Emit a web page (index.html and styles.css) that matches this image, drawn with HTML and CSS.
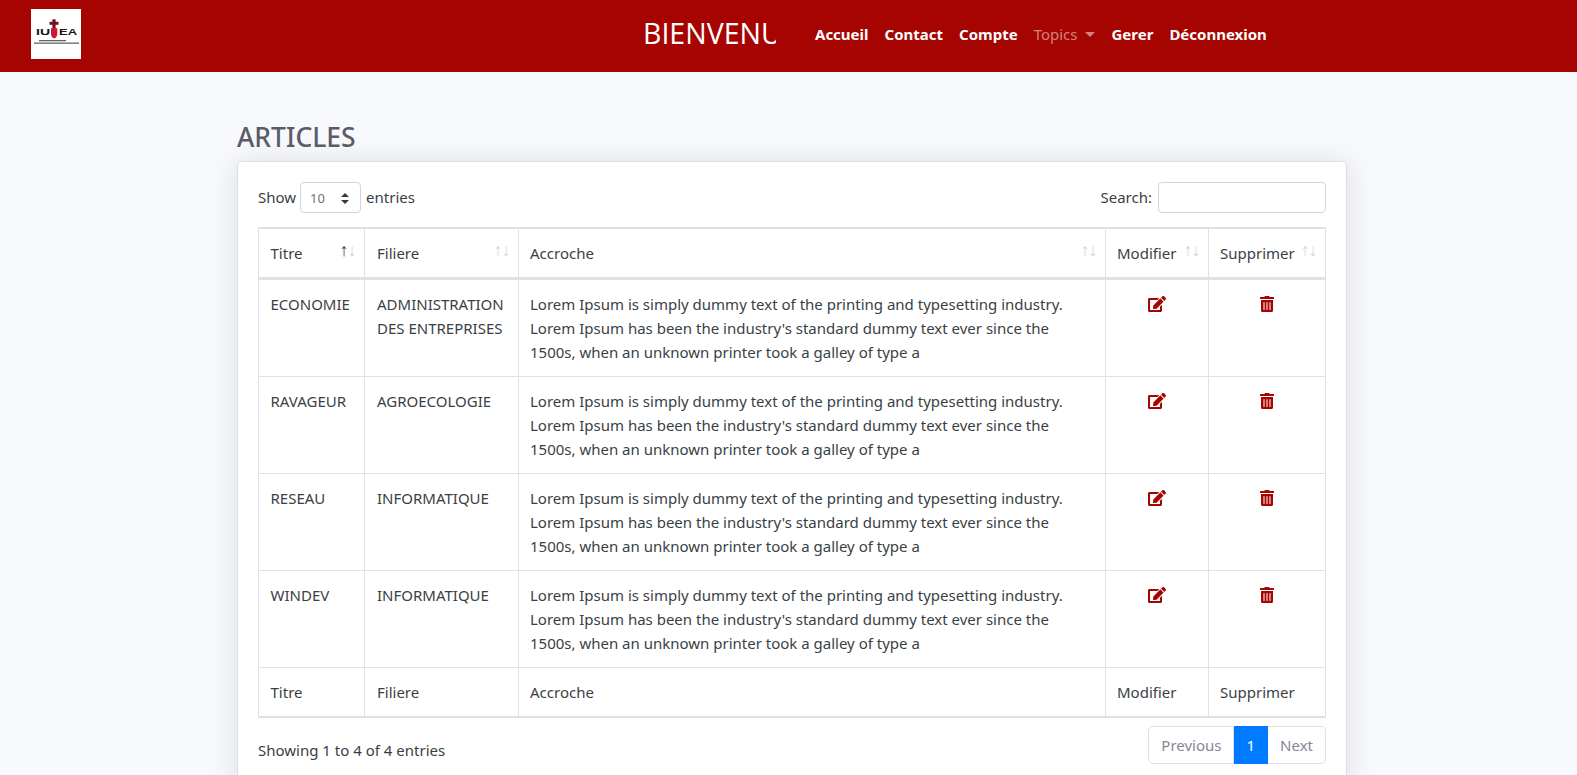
FILE: index.html
```html
<!DOCTYPE html>
<html lang="fr">
<head>
<meta charset="utf-8">
<title>Articles</title>
<link rel="stylesheet" href="styles.css">
</head>
<body>
<svg class="sprite" width="0" height="0" aria-hidden="true">
  <symbol id="i-edit" viewBox="0 0 576 512"><path d="M402.6 83.2l90.2 90.2c3.8 3.8 3.8 10 0 13.8L274.4 405.6l-92.8 10.3c-12.4 1.4-22.9-9.1-21.5-21.5l10.3-92.8L388.8 83.2c3.8-3.8 10-3.8 13.8 0zm162-22.9l-48.8-48.8c-15.2-15.2-39.9-15.2-55.2 0l-35.4 35.4c-3.8 3.8-3.8 10 0 13.8l90.2 90.2c3.8 3.8 10 3.8 13.8 0l35.4-35.4c15.2-15.3 15.2-40 0-55.2zM384 346.2V448H64V128h229.8c3.2 0 6.2-1.3 8.5-3.5l40-40c7.6-7.6 2.2-20.5-8.5-20.5H48C21.5 64 0 85.5 0 112v352c0 26.5 21.5 48 48 48h352c26.5 0 48-21.5 48-48V306.2c0-10.7-12.9-16-20.5-8.5l-40 40c-2.2 2.3-3.5 5.3-3.5 8.5z"/></symbol>
  <symbol id="i-trash" viewBox="0 0 448 512"><path d="M32 464a48 48 0 0 0 48 48h288a48 48 0 0 0 48-48V128H32zm272-256a16 16 0 0 1 32 0v224a16 16 0 0 1-32 0zm-96 0a16 16 0 0 1 32 0v224a16 16 0 0 1-32 0zm-96 0a16 16 0 0 1 32 0v224a16 16 0 0 1-32 0zM432 32H312l-9.4-18.7A24 24 0 0 0 281.1 0H166.8a23.72 23.72 0 0 0-21.4 13.3L136 32H16A16 16 0 0 0 0 48v32a16 16 0 0 0 16 16h416a16 16 0 0 0 16-16V48a16 16 0 0 0-16-16z"/></symbol>
</svg>

<header class="navbar">
  <a class="logo" href="#" aria-label="IUEA">
    <svg viewBox="0 0 50 50" width="50" height="50">
      <rect width="50" height="50" fill="#fff"/>
      <rect x="18.500" y="12.800" width="9" height="3" fill="#6d1420"/>
      <rect x="21.400" y="10.300" width="3.200" height="10" fill="#6d1420"/>
      <path d="M20 19.300h6.300v5.500c0 2.500-1.600 4.500-3.150 4.500S20 27.300 20 24.800z" fill="#d0172b"/>
      <text x="5" y="26" class="logo-l" textLength="14" lengthAdjust="spacingAndGlyphs">IU</text>
      <text x="28" y="26" class="logo-l" textLength="18" lengthAdjust="spacingAndGlyphs">EA</text>
      <rect x="8" y="31" width="27" height="1.300" fill="#666"/>
      <rect x="3" y="33.500" width="45" height="1.300" fill="#666"/>
    </svg>
  </a>
  <div class="marquee"><span>BIENVENU</span></div>
  <nav class="menu">
    <a href="#">Accueil</a>
    <a href="#">Contact</a>
    <a href="#">Compte</a>
    <a href="#" class="muted">Topics<i class="caret"></i></a>
    <a href="#">Gerer</a>
    <a href="#">Déconnexion</a>
  </nav>
</header>

<main class="content">
  <h1 class="title">ARTICLES</h1>
  <section class="card">
    <div class="controls">
      <label class="show">Show <span class="select">10<i class="updown"></i></span> entries</label>
      <label class="search">Search: <input type="search" class="search-input"></label>
    </div>
    <table class="table">
      <colgroup>
        <col class="c-titre"><col class="c-filiere"><col class="c-accroche"><col class="c-mod"><col class="c-sup">
      </colgroup>
      <thead>
        <tr>
          <th><span class="th-in">Titre<span class="sort"><b class="on">↑</b><b>↓</b></span></span></th>
          <th><span class="th-in">Filiere<span class="sort"><b>↑</b><b>↓</b></span></span></th>
          <th><span class="th-in">Accroche<span class="sort"><b>↑</b><b>↓</b></span></span></th>
          <th><span class="th-in">Modifier<span class="sort"><b>↑</b><b>↓</b></span></span></th>
          <th><span class="th-in">Supprimer<span class="sort"><b>↑</b><b>↓</b></span></span></th>
        </tr>
      </thead>
      <tbody>
        <tr>
          <td>ECONOMIE</td>
          <td>ADMINISTRATION DES ENTREPRISES</td>
          <td>Lorem Ipsum is simply dummy text of the printing and typesetting industry. Lorem Ipsum has been the industry's standard dummy text ever since the 1500s, when an unknown printer took a galley of type a</td>
          <td class="act"><svg class="ic-edit"><use href="#i-edit"/></svg></td>
          <td class="act"><svg class="ic-trash"><use href="#i-trash"/></svg></td>
        </tr>
        <tr>
          <td>RAVAGEUR</td>
          <td>AGROECOLOGIE</td>
          <td>Lorem Ipsum is simply dummy text of the printing and typesetting industry. Lorem Ipsum has been the industry's standard dummy text ever since the 1500s, when an unknown printer took a galley of type a</td>
          <td class="act"><svg class="ic-edit"><use href="#i-edit"/></svg></td>
          <td class="act"><svg class="ic-trash"><use href="#i-trash"/></svg></td>
        </tr>
        <tr>
          <td>RESEAU</td>
          <td>INFORMATIQUE</td>
          <td>Lorem Ipsum is simply dummy text of the printing and typesetting industry. Lorem Ipsum has been the industry's standard dummy text ever since the 1500s, when an unknown printer took a galley of type a</td>
          <td class="act"><svg class="ic-edit"><use href="#i-edit"/></svg></td>
          <td class="act"><svg class="ic-trash"><use href="#i-trash"/></svg></td>
        </tr>
        <tr>
          <td>WINDEV</td>
          <td>INFORMATIQUE</td>
          <td>Lorem Ipsum is simply dummy text of the printing and typesetting industry. Lorem Ipsum has been the industry's standard dummy text ever since the 1500s, when an unknown printer took a galley of type a</td>
          <td class="act"><svg class="ic-edit"><use href="#i-edit"/></svg></td>
          <td class="act"><svg class="ic-trash"><use href="#i-trash"/></svg></td>
        </tr>
      </tbody>
      <tfoot>
        <tr><th>Titre</th><th>Filiere</th><th>Accroche</th><th>Modifier</th><th>Supprimer</th></tr>
      </tfoot>
    </table>
    <div class="table-bottom">
      <div class="info">Showing 1 to 4 of 4 entries</div>
      <ul class="pagination">
        <li><a href="#">Previous</a></li>
        <li class="active"><a href="#">1</a></li>
        <li><a href="#">Next</a></li>
      </ul>
    </div>
  </section>
</main>
</body>
</html>
```

FILE: styles.css
```css
* { box-sizing: border-box; }
html, body { margin: 0; padding: 0; }
body {
  background: #f8f9fc;
  color: #3a3f45;
  font-family: "Noto Sans", "Open Sans", sans-serif;
  font-size: 15px;
  line-height: 24px;
}
a { text-decoration: none; color: inherit; }
.sprite { position: absolute; }

.navbar {
  display: flex;
  align-items: center;
  height: 72px;
  padding: 0 0 4px 31px;
  background: #a60400;
}
.logo { display: block; width: 50px; height: 50px; }
.logo svg { display: block; }
.logo-l { font: 700 8.500px "Liberation Sans", sans-serif; fill: #151515; }

.marquee {
  width: 133px;
  margin: 0 0 2px 562px;
  overflow: hidden;
  white-space: nowrap;
  color: #fff;
  font-size: 28.500px;
  line-height: 40px;
  font-family: "Open Sans", sans-serif;
  font-weight: 400;
}
.menu { display: flex; gap: 16px; margin-left: 39px; }
.menu a { color: #fff; font-size: 15px; font-weight: 700; }
.menu a.muted { color: rgba(255, 255, 255, .5); font-weight: 400; }
.caret {
  display: inline-block;
  margin-left: 8px;
  vertical-align: 3px;
  border-top: 5px solid;
  border-left: 5px solid transparent;
  border-right: 5px solid transparent;
}

.content { width: 1110px; margin-left: 237px; padding-top: 47px; }
.title {
  margin: 0 0 6px;
  color: #5a5c69;
  font-size: 26.500px;
  line-height: 36px;
  font-weight: 500;
}
.card {
  background: #fff;
  border: 1px solid #dddfe6;
  border-radius: 5px;
  box-shadow: 0 2px 28px rgba(58, 59, 69, .15);
  padding: 20px;
}
.controls { display: flex; justify-content: space-between; align-items: center; height: 31px; margin-bottom: 14px; line-height: 29px; }
.show { display: flex; align-items: center; gap: 4px; }
.show .select { margin-right: 1px; }
.select {
  position: relative;
  display: block;
  width: 61px;
  height: 31px;
  padding: 1px 9px 0;
  border: 1px solid #d1d3e2;
  border-radius: 4px;
  font-size: 13px;
  line-height: 29px;
  color: #6e707e;
}
.updown { position: absolute; right: 11px; top: 10px; width: 8px; height: 11px; }
.updown::before, .updown::after {
  content: "";
  position: absolute;
  left: 0;
  border-left: 4px solid transparent;
  border-right: 4px solid transparent;
}
.updown::before { top: 0; border-bottom: 4.500px solid #343a40; }
.updown::after { bottom: 0; border-top: 4.500px solid #343a40; }
.search { display: flex; align-items: center; gap: 6px; }
.search-input {
  display: block;
  width: 168px;
  height: 31px;
  border: 1px solid #d1d3e2;
  border-radius: 4px;
  background: #fff;
}

.table {
  width: 1067px;
  table-layout: fixed;
  border-collapse: separate;
  border-spacing: 0;
  border: 1px solid #dee2e6;
}
.c-titre { width: 106px; }
.c-filiere { width: 154px; }
.c-accroche { width: 587px; }
.c-mod { width: 103px; }
.c-sup { width: 116px; }
.table th, .table td {
  padding: 12px 11px;
  border: 1px solid #dee2e6;
  border-left-width: 0;
  font-weight: 400;
  vertical-align: top;
  text-align: left;
}
.table tr > :first-child { padding-left: 11.500px; }
.table tr > :nth-child(2) { padding-left: 12px; }
.table tr > :last-child { border-right-width: 0; }
.table thead th { border-bottom-width: 2px; white-space: nowrap; }
.table tbody td { border-bottom-width: 0; height: 97px; }
.table tbody td.act { text-align: center; padding: 14px 0 0; }
.th-in { display: block; position: relative; }
.sort {
  position: absolute;
  right: -3px;
  top: -1px;
  display: flex;
  color: #d4d6da;
  font-size: 18px;
  line-height: 20px;
  font-family: "Liberation Sans", sans-serif;
}
.sort b { font-weight: 400; width: 8px; display: flex; justify-content: center; }
.sort .on { color: #3a3f45; }
.ic-edit { width: 18px; height: 16px; fill: #a60400; display: inline-block; }
.ic-trash { width: 14px; height: 16px; fill: #a60400; display: inline-block; }

.table-bottom { display: flex; justify-content: space-between; align-items: flex-start; padding-top: 8px; }
.info { padding-top: 12px; }
.pagination { display: flex; list-style: none; margin: 0; padding: 0; }
.pagination a {
  display: block;
  height: 38px;
  padding: 6px 12px;
  border: 1px solid #dddfeb;
  border-left-width: 0;
  color: #858796;
}
.pagination li:first-child a { border-left-width: 1px; border-radius: 5px 0 0 5px; }
.pagination li:last-child a { border-radius: 0 5px 5px 0; }
.pagination .active a { background: #007bff; border-color: #007bff; color: #fff; }
```
